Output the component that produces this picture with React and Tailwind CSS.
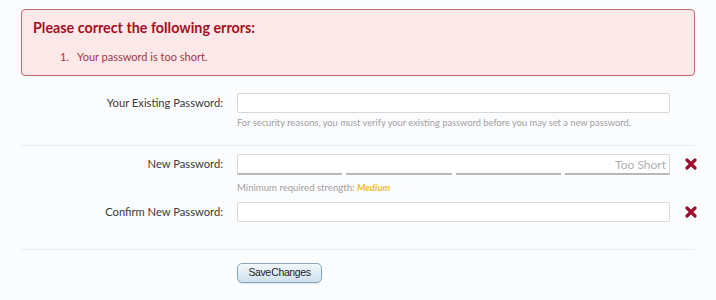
import React from 'react';

function RedX() {
  return (
    <svg width="12" height="12" viewBox="0 0 12 12" className="shrink-0">
      <path d="M2 2 L10 10 M10 2 L2 10" stroke="#9b1030" strokeWidth="3.2" strokeLinecap="round" />
    </svg>
  );
}

function Row({ label, children, after }) {
  return (
    <div className="flex items-start">
      <div className="w-[223px] shrink-0 text-right text-[11.2px] leading-[20px] text-[#3a3a3a]">{label}</div>
      <div className="ml-[14px] w-[433px] shrink-0">{children}</div>
      <div className="ml-[15px] flex h-[20px] items-center">{after}</div>
    </div>
  );
}

export default function App() {
  return (
    <div className="h-[300px] w-[716px] bg-[#fbfcfe] pt-[9px] font-['Lato','Open_Sans',sans-serif]">
      {/* error summary */}
      <div className="mx-[21px] h-[67px] rounded-[4px] border border-[#c06a70] bg-[#fde8e9] px-[11px] pt-[9px]">
        <h2 className="text-[14.3px] font-bold leading-[18px] text-[#a3101f]">Please correct the following errors:</h2>
        <ol className="mt-[13px] flex text-[11px] leading-[14px] text-[#a33846]">
          <li className="flex">
            <span className="ml-[27px] w-[17px]">1.</span>
            <span>Your password is too short.</span>
          </li>
        </ol>
      </div>

      <div className="mt-[17px] pb-[15px]">
        <Row label="Your Existing Password:">
          <input type="password" className="block h-[20px] w-[433px] rounded-[2px] border border-[#d8d8d8] bg-white outline-none" />
          <p className="mt-[3px] text-[9.3px] leading-[14px] text-[#a0a0a0]">
            For security reasons, you must verify your existing password before you may set a new password.
          </p>
        </Row>
      </div>

      <div className="mx-[21px] h-px bg-[#e4eef0]" />

      <div className="pt-[8px]">
        <Row label="New Password:" after={<RedX />}>
          <div className="relative h-[21px] w-[433px] rounded-[2px] border border-[#d8d8d8] border-b-0 bg-white">
            <span className="absolute right-[3px] top-[1px] text-[12px] leading-[18px] text-[#b0b0b0]">Too Short</span>
            <div className="absolute -left-px -right-px bottom-0 flex gap-[4px]">
              <div className="h-[2px] flex-1 rounded-bl-[2px] bg-[#b8b8b8]" />
              <div className="h-[2px] flex-1 bg-[#b8b8b8]" />
              <div className="h-[2px] flex-1 bg-[#b8b8b8]" />
              <div className="h-[2px] flex-1 rounded-br-[2px] bg-[#b8b8b8]" />
            </div>
          </div>
          <p className="mt-[6px] text-[9.6px] leading-[13px] text-[#a0a0a0]">
            Minimum required strength: <span className="font-bold italic text-[#f0c030]">Medium</span>
          </p>
        </Row>
        <div className="mt-[8px]">
          <Row label="Confirm New Password:" after={<RedX />}>
            <input type="password" className="block h-[20px] w-[433px] rounded-[2px] border border-[#d8d8d8] bg-white outline-none" />
          </Row>
        </div>
      </div>

      <div className="mx-[21px] mt-[27px] h-px bg-[#e4eef0]" />

      <div className="flex pl-[237px] pt-[13px]">
        <button className="h-[20px] w-[85px] rounded-[5px] border border-[#8aa6bf] bg-gradient-to-b from-[#f2f8fc] to-[#cfe1ef] font-['Liberation_Sans',sans-serif] text-[10.5px] tracking-[-0.4px] [word-spacing:-2px] text-[#222] shadow-[0_1px_1px_rgba(0,0,0,0.1)]">
          Save Changes
        </button>
      </div>
    </div>
  );
}
